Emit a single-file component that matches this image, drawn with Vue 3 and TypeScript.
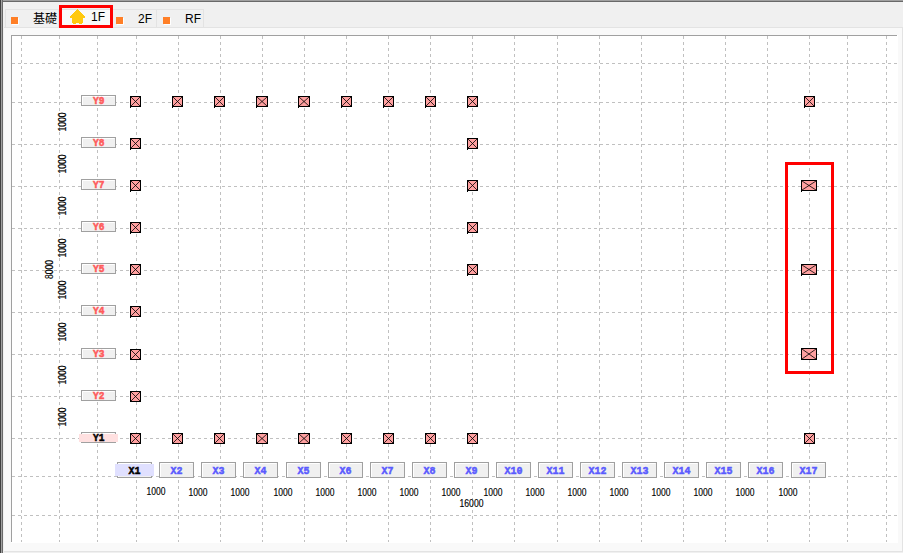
<script setup lang="ts">
interface Marker { x: number; y: number; w: number; h: number }

const gridX: number[] = [21, 59, 97, 136, 178, 220, 262, 304, 346, 388, 430, 472, 514, 557, 599, 641, 683, 725, 767, 809, 847, 886]
const gridY: number[] = [63, 102, 144, 186, 228, 270, 312, 354, 396, 438, 476, 515]

const xLabels = [117, 159, 201, 243, 286, 328, 370, 412, 454, 496, 538, 580, 622, 664, 706, 748, 791]
  .map((x, i) => ({ x, name: `X${i + 1}` }))
const yLabels = [432, 390, 348, 305, 263, 221, 179, 137, 95]
  .map((y, i) => ({ y, name: `Y${i + 1}` }))

const xDims = [146.5, 188.5, 230.5, 273.5, 315.5, 357.5, 399.5, 441.5, 483.5, 525.5, 567.5, 609.5, 651.5, 693.5, 735.5, 778.5]
const yDims = [122, 164, 206, 248, 290, 332, 375, 417]

const colX = [130, 172, 214, 256, 298, 341, 383, 425, 467, 804]
const rowY = [138, 180, 222, 264, 306, 349, 391]

const box = (x: number, y: number, w = 11, h = 11): Marker => ({ x, y, w, h })
const colWidth = (x: number): number => (x === 256 || x === 298 ? 12 : 11)
const markers: Marker[] = [
  ...colX.map(x => box(x, 96, colWidth(x))),
  ...colX.map(x => box(x, 433, colWidth(x))),
  ...rowY.map(y => box(130, y)),
  ...rowY.slice(0, 4).map(y => box(467, y)),
  box(801, 180, 16, 11),
  box(801, 264, 16, 11),
  box(801, 348, 16, 12),
]
const cross = (m: Marker): string => {
  const l = m.x + 1
  const t = m.y + 1
  const r = m.x + m.w - 1
  const b = m.y + m.h - 1
  return `M${l} ${t}L${r} ${b}M${r} ${t}L${l} ${b}`
}
</script>

<template>
  <div class="window">
    <nav class="tabs">
      <div class="tab first"><i class="dot"></i><span>基礎</span></div>
      <div class="tab active">
        <svg class="house" width="16" height="15" viewBox="0 0 16 15" shape-rendering="crispEdges">
          <path d="M7 0h2v1h1v1h1v1h1v1h1v1h1v1h1v1h1v2h-2v5h-1v1h-3v-1h-3v1h-3v-1h-1v-5h-2v-2h1v-1h1v-1h1v-1h1v-1h1v-1h1v-1h1z" fill="#ffc90e" />
        </svg>
        <span>1F</span>
      </div>
      <div class="tab third"><i class="dot"></i><span>2F</span></div>
      <div class="tab fourth"><i class="dot"></i><span>RF</span></div>
    </nav>
    <main class="panel">
      <svg class="plan" width="887" height="508" viewBox="11 35 887 508">
        <g class="grid">
          <path v-for="x in gridX" :key="'v' + x" :d="`M${x + 0.5} 36V542`" />
          <path v-for="y in gridY" :key="'h' + y" :d="`M12 ${y + 0.5}H897`" />
        </g>
        <g v-for="l in yLabels" :key="l.name">
          <rect class="plate" :x="81.5" :y="l.y + 0.5" width="34" height="10" />
          <path class="shine" :d="`M82.5 ${l.y + 10}v-8.5h32`" />
          <rect v-if="l.name === 'Y1'" x="79" y="434" width="39" height="8" fill="#ffe0e0" />
          <text class="label y" :class="{ current: l.name === 'Y1' }" x="93" :y="l.y + 9" textLength="11.5" lengthAdjust="spacingAndGlyphs">{{ l.name }}</text>
        </g>
        <g v-for="l in xLabels" :key="l.name">
          <rect class="plate" :x="l.x + 0.5" y="462.5" width="34" height="15" />
          <path class="shine" :d="`M${l.x + 1.5} 477v-13.5h32`" />
          <rect v-if="l.name === 'X1'" x="115" y="464" width="39" height="12" fill="#e0e0ff" />
          <text class="label x" :class="{ current: l.name === 'X1' }" :x="l.x + (l.name.length > 2 ? 8.5 : 11.5)" y="474" :textLength="l.name.length > 2 ? 18 : 12" lengthAdjust="spacingAndGlyphs">{{ l.name }}</text>
        </g>
        <g class="dim">
          <text v-for="(x, i) in xDims" :key="'dx' + i" :x="x" :y="i === 0 ? 494.5 : 496" textLength="19" lengthAdjust="spacingAndGlyphs">1000</text>
          <text x="459.5" y="507" textLength="24" lengthAdjust="spacingAndGlyphs">16000</text>
          <text v-for="(y, i) in yDims" :key="'dy' + i" :transform="`translate(66 ${y + 9.5}) rotate(-90)`" textLength="19" lengthAdjust="spacingAndGlyphs">1000</text>
          <text transform="translate(53 279) rotate(-90)" textLength="19" lengthAdjust="spacingAndGlyphs">8000</text>
        </g>
        <g v-for="(m, i) in markers" :key="'m' + i" class="marker">
          <rect :x="m.x + 0.5" :y="m.y + 0.5" :width="m.w - 1" :height="m.h - 1" />
          <path :d="cross(m)" />
          <path v-if="m.y < 320" class="foot" :d="`M${m.x + 0.5} ${m.y + m.h}v1`" />
        </g>
      </svg>
    </main>
    <div class="callout tab-callout"></div>
    <div class="callout column-callout"></div>
  </div>
</template>

<style>
body { overflow: hidden; background: #fff; }
</style>

<style scoped>
.window {
  position: relative;
  box-sizing: border-box;
  width: 904px;
  height: 553px;
  padding: 2px 0 0 4px;
  background: linear-gradient(#a0a0a0 1px, #696969 1px, #696969 2px, #f0f0f0 2px);
  border-right: 1px solid #fff;
}
.window::before {
  content: '';
  position: absolute;
  left: 0;
  top: 0;
  width: 3px;
  height: 553px;
  background: linear-gradient(90deg, #404040 1px, #a0a0a0 1px, #a0a0a0 2px, #696969 2px);
}
.tabs {
  display: flex;
  box-sizing: border-box;
  height: 25px;
  padding: 7px 0 0 1px;
  font: 12px/18px "Liberation Sans", "Noto Sans CJK JP", sans-serif;
  color: #000;
}
.tab {
  box-sizing: border-box;
  display: flex;
  height: 18px;
  border: 1px solid #e3e3e3;
  border-bottom: 0;
  border-left-width: 0;
}
.first { width: 54px; border-left-width: 1px; padding-left: 5px; gap: 15px; }
.active { width: 54px; background: #f9f9f9; padding-left: 10px; gap: 6px; }
.third { width: 44px; padding-left: 3px; gap: 15px; }
.fourth { width: 47px; padding-left: 6px; gap: 15px; }
.dot { width: 7px; height: 7px; margin-top: 7px; background: #ff7f27; flex: none; box-shadow: 1px 1px #fff; }
.tab span { white-space: nowrap; }
.active span { margin-top: -2px; }
.house { flex: none; margin-top: -1px; }
.panel {
  box-sizing: border-box;
  width: 899px;
  height: 525px;
  padding: 7px 0 0 7px;
  background: #f9f9f9;
  border: 1px solid #e3e3e3;
  border-left: 0;
}
.plan {
  display: block;
  box-sizing: border-box;
  background: linear-gradient(#a0a0a0, #a0a0a0) 0 0 / 886px 1px no-repeat, linear-gradient(#a0a0a0, #a0a0a0) 0 0 / 1px 507px no-repeat, #fff;
}
.grid path { stroke: #c0c0c0; stroke-dasharray: 3 3; shape-rendering: crispEdges; }
.plate { fill: #f0f0f0; stroke: #a0a0a0; }
.shine { fill: none; stroke: #fff; }
.label { font: bold 10.5px "Liberation Mono", monospace; stroke-width: 0.5; }
.label.x { fill: #5a5aff; stroke: #5a5aff; }
.label.y { fill: #ff5a5a; stroke: #ff5a5a; }
.label.current { fill: #000; stroke: #000; }
.dim { font: 10.5px "Liberation Sans", sans-serif; fill: #000; stroke: #000; stroke-width: 0.15; }
.marker rect { fill: #ffa0a0; stroke: #000; }
.marker path { stroke: #000; stroke-width: 0.8; }
.marker .foot { stroke-width: 1; }
.callout { position: absolute; box-sizing: border-box; border: 3px solid #f00; }
.tab-callout { left: 59px; top: 5px; width: 54px; height: 23px; }
.column-callout { left: 785px; top: 162px; width: 49px; height: 212px; }
</style>
